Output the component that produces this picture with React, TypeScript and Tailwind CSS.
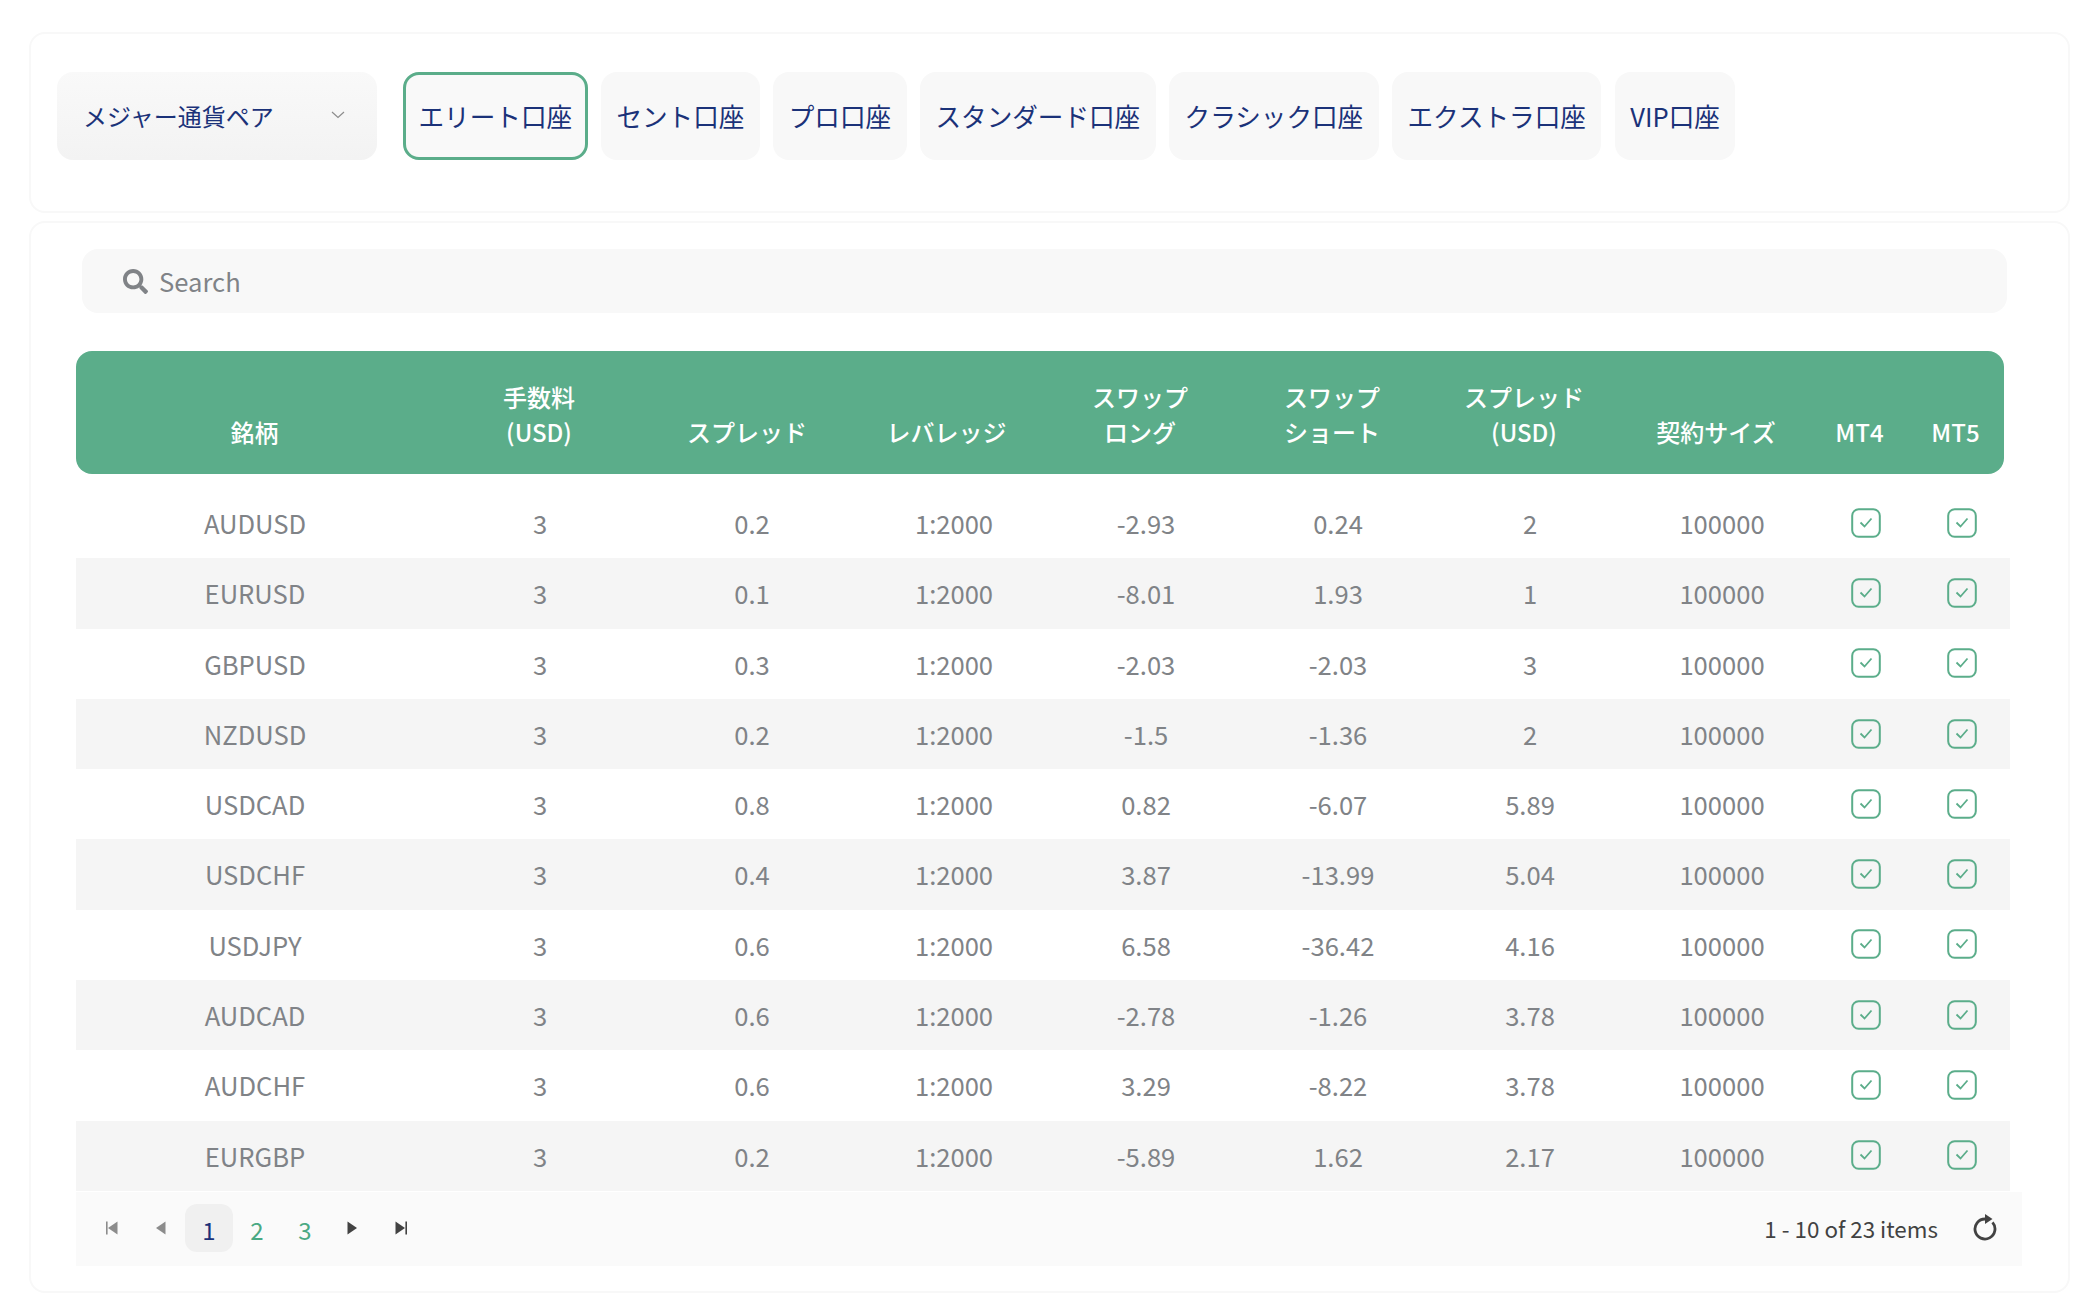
import { FaSearch } from "react-icons/fa";

const accounts = ["エリート口座", "セント口座", "プロ口座", "スタンダード口座", "クラシック口座", "エクストラ口座", "VIP口座"];

const rows = [
  ["AUDUSD", "3", "0.2", "1:2000", "-2.93", "0.24", "2", "100000"],
  ["EURUSD", "3", "0.1", "1:2000", "-8.01", "1.93", "1", "100000"],
  ["GBPUSD", "3", "0.3", "1:2000", "-2.03", "-2.03", "3", "100000"],
  ["NZDUSD", "3", "0.2", "1:2000", "-1.5", "-1.36", "2", "100000"],
  ["USDCAD", "3", "0.8", "1:2000", "0.82", "-6.07", "5.89", "100000"],
  ["USDCHF", "3", "0.4", "1:2000", "3.87", "-13.99", "5.04", "100000"],
  ["USDJPY", "3", "0.6", "1:2000", "6.58", "-36.42", "4.16", "100000"],
  ["AUDCAD", "3", "0.6", "1:2000", "-2.78", "-1.26", "3.78", "100000"],
  ["AUDCHF", "3", "0.6", "1:2000", "3.29", "-8.22", "3.78", "100000"],
  ["EURGBP", "3", "0.2", "1:2000", "-5.89", "1.62", "2.17", "100000"],
];

const headers = [
  ["銘柄"],
  ["手数料", "(USD)"],
  ["スプレッド"],
  ["レバレッジ"],
  ["スワップ", "ロング"],
  ["スワップ", "ショート"],
  ["スプレッド", "(USD)"],
  ["契約サイズ"],
  ["MT4"],
  ["MT5"],
];

function CheckBox() {
  return (
    <svg width="30" height="30" viewBox="0 0 30 30" fill="none" stroke="#5bad8a">
      <rect x="1.2" y="1.2" width="27.6" height="27.6" rx="6.5" strokeWidth="2" />
      <path d="M9.5 14.5l4 4 7-8" strokeWidth="1.8" />
    </svg>
  );
}

function PagerIcon({ dir, bar, color }: { dir: "left" | "right"; bar?: boolean; color: string }) {
  return (
    <svg width="14" height="14" viewBox="0 0 14 14" fill={color}>
      {dir === "left" ? <path d="M12.5 .5v13L3 7z" /> : <path d="M1.5 .5v13L11 7z" />}
      {bar && (dir === "left" ? <rect x="1" y=".5" width="1.6" height="13" /> : <rect x="11.4" y=".5" width="1.6" height="13" />)}
    </svg>
  );
}

export default function App() {
  return (
    <div className="min-h-[1312px] bg-white pt-8 pl-[29px] pr-[15px] font-['Noto_Sans_CJK_JP',sans-serif]">
      <div className="flex h-[181px] w-[2041px] items-start gap-[26px] rounded-2xl border-2 border-[#f8f8f8] pl-[26px] pt-[38px]">
        <div className="flex h-[88px] w-[320px] items-center justify-between rounded-2xl bg-gradient-to-b from-[#f9f9f9] to-[#f3f3f3] pl-[26px] pr-[32px] text-[24px] text-[#1b3279]">
          <span>メジャー通貨ペア</span>
          <svg width="14" height="8" viewBox="0 0 14 8" fill="none" stroke="#8c8c8c" strokeWidth="1.2" className="-mt-[3px]">
            <path d="M1 1l6 5.5L13 1" />
          </svg>
        </div>
        <div className="flex gap-[13.33px]">
          {accounts.map((name, i) => (
            <div
              key={name}
              className={
                i === 0
                  ? "flex h-[88px] items-center rounded-2xl border-[3px] border-[#5bad8a] bg-[#f9f9f9] px-[12.5px] text-[25.6px] text-[#1b3279]"
                  : "flex h-[88px] items-center rounded-2xl bg-[#f8f8f8] px-[15.5px] text-[25.6px] text-[#1b3279]"
              }
            >
              {name}
            </div>
          ))}
        </div>
      </div>

      <div className="mt-2 h-[1072px] w-[2041px] rounded-2xl border-2 border-[#f8f8f8] pl-[45px] pt-[26px]">
        <div className="ml-1.5 flex h-16 w-[1925px] items-center gap-[11px] rounded-2xl bg-[#f8f8f8] pl-[41px] text-[25.6px] text-[#808387]">
          <FaSearch className="size-[25px] text-[#808387]" />
          <span>Search</span>
        </div>

        <div className="mt-[38px] grid h-[123px] w-[1928px] grid-cols-[357px_212px_204px_195px_192px_192px_192px_192px_95px_97px] rounded-2xl bg-[#5bad8a] pb-[25px] text-[24px] leading-[35px] font-medium text-white">
          {headers.map((lines) => (
            <div key={lines[0] + lines.length} className="flex flex-col items-center justify-end">
              {lines.map((line) => (
                <span key={line}>{line}</span>
              ))}
            </div>
          ))}
        </div>

        <div className="mt-3.5 w-[1934px]">
          {rows.map((row, i) => (
            <div
              key={row[0]}
              className={
                i % 2 === 1
                  ? "grid h-[70.3px] grid-cols-[358px_212px_212px_192px_192px_192px_192px_192px_96px_96px] items-center bg-[#f5f5f5] text-[25.6px] text-[#808387]"
                  : "grid h-[70.3px] grid-cols-[358px_212px_212px_192px_192px_192px_192px_192px_96px_96px] items-center text-[25.6px] text-[#808387]"
              }
            >
              {row.map((cell, j) => (
                <div key={j} className="text-center">
                  {cell}
                </div>
              ))}
              <div className="-mt-px flex justify-center">
                <CheckBox />
              </div>
              <div className="-mt-px flex justify-center">
                <CheckBox />
              </div>
            </div>
          ))}
        </div>

        <div className="mt-px flex h-[74px] w-[1946px] items-center justify-between bg-[#fafafa] pl-3 pr-[25px]">
          <div className="-mt-px flex items-center text-[24px]">
            <div className="flex size-12 items-center justify-center">
              <PagerIcon dir="left" bar color="#8c8c8c" />
            </div>
            <div className="flex size-12 items-center justify-center">
              <PagerIcon dir="left" color="#8c8c8c" />
            </div>
            <div className="ml-px flex size-12 items-center justify-center rounded-xl bg-[#f0f0f0] pt-1 text-[#1b3279]">1</div>
            <div className="flex size-12 items-center justify-center pt-1 text-[#4aa983]">2</div>
            <div className="flex size-12 items-center justify-center pt-1 text-[#4aa983]">3</div>
            <div className="flex size-12 items-center justify-center">
              <PagerIcon dir="right" color="#424242" />
            </div>
            <div className="flex h-12 w-[47px] items-center justify-center">
              <PagerIcon dir="right" bar color="#424242" />
            </div>
          </div>
          <div className="flex items-center gap-[35px] text-[22.4px] text-[#424242]">
            <span>1 - 10 of 23 items</span>
            <svg width="24" height="28" viewBox="0 0 24 28" fill="none" className="-mt-1">
              <path d="M19.5 9.4A10 10 0 1 1 12 6" stroke="#424242" strokeWidth="2.8" />
              <path d="M12 1l7.5 5-7.5 5z" fill="#424242" />
            </svg>
          </div>
        </div>
      </div>
    </div>
  );
}
